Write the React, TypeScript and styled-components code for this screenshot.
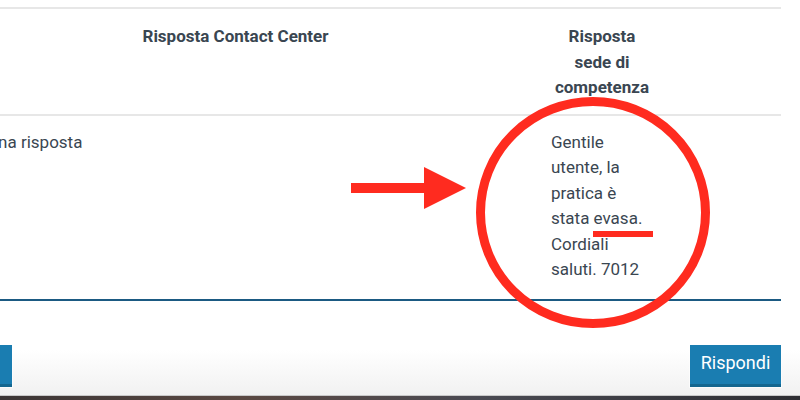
import styled, {createGlobalStyle} from "styled-components";

const GlobalStyle = createGlobalStyle`
    html, body {
        margin: 0;
        padding: 0;
    }
    body {
        font-family: Roboto, "Noto Sans", sans-serif;
        color: #38444f;
    }
`

const Page = styled.div`
    position: relative;
    width: 800px;
    height: 400px;
    overflow: hidden;
    display: flex;
    flex-direction: column;
    background: linear-gradient(to bottom, #ffffff 0, #ffffff 350px, #f1f1f1 395px);
`

const Panel = styled.div`
    flex: 1;
    padding-top: 7px;
    margin-left: -65px;
    width: 846px;
`

const Table = styled.div`
    display: grid;
    grid-template-columns: 601px 132px 113px;
    border-top: 2px solid #e7e7e7;
`

const HeadCell = styled.div`
    padding: 15px 15px 13px;
    font-weight: 700;
    font-size: 17px;
    line-height: 25.5px;
    text-align: center;
    color: #3a4651;
    border-bottom: 2px solid #e7e7e7;
`

const BodyCell = styled.div`
    padding: 14px 15px 16px;
    font-size: 17px;
    line-height: 25.5px;
    color: #3a4651;
    border-bottom: 2px solid #1b5a82;
`

const Actions = styled.div`
    display: flex;
    justify-content: space-between;
    margin-top: 44px;
    width: 781px;
    margin-left: 65px;
`

const Button = styled.button<{ $offset?: number }>`
    width: 91px;
    height: 42px;
    padding: 0 0 3px;
    margin-left: ${p => p.$offset ?? 0}px;
    border: none;
    border-bottom: 3px solid #14668f;
    background: #1a7db1;
    color: #ffffff;
    font-family: Roboto, "Noto Sans", sans-serif;
    font-size: 18px;
    text-align: center;
    white-space: nowrap;
    box-shadow: 0 0 0 1px rgba(255, 255, 255, 0.6);
`

const Backdrop = styled.div`
    height: 4px;
    border-top: 1px solid #c9c9c9;
    background: linear-gradient(to right, #3b3535 0, #5a4842 30%, #4a4a52 60%, #2e2e33 100%);
`

const Annotation = styled.svg`
    position: absolute;
    top: 0;
    left: 0;
    pointer-events: none;
`

const RED = "#ff2b1f";

export default function App() {
    return (
        <>
            <GlobalStyle/>
            <Page>
                <Panel>
                    <Table>
                        <HeadCell>Risposta Contact Center</HeadCell>
                        <HeadCell>Risposta<br/>sede di<br/>competenza</HeadCell>
                        <HeadCell/>
                        <BodyCell>Nessuna risposta</BodyCell>
                        <BodyCell>
                            Gentile<br/>utente, la<br/>pratica è<br/>stata evasa.<br/>Cordiali<br/>saluti. 7012
                        </BodyCell>
                        <BodyCell/>
                    </Table>
                    <Actions>
                        <Button $offset={-79}>Annulla</Button>
                        <Button>Rispondi</Button>
                    </Actions>
                </Panel>
                <Backdrop/>
                <Annotation width={800} height={400} viewBox="0 0 800 400">
                    <ellipse cx={593} cy={212.5} rx={112.5} ry={111} fill="none" stroke={RED} strokeWidth={9}/>
                    <rect x={351} y={183} width={76} height={10} fill={RED}/>
                    <polygon points="424,167 466,188 424,209" fill={RED}/>
                    <rect x={593} y={231} width={60} height={6} fill={RED}/>
                </Annotation>
            </Page>
        </>
    );
}
